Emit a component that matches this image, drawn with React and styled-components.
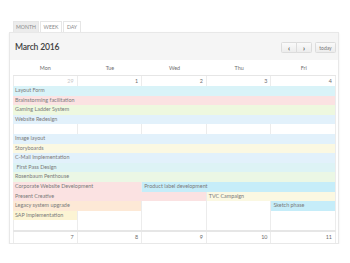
import React from "react";
import styled, { createGlobalStyle } from "styled-components";

const GlobalStyle = createGlobalStyle`
  body {
    margin: 0;
    background: #ffffff;
    font-family: Lato, "Open Sans", sans-serif;
  }
`;

const days = ["Mon", "Tue", "Wed", "Thu", "Fri"];

const colors = {
  cyan: "#d9f3f8",
  pink: "#fbe2e2",
  lime: "#eef8df",
  blue: "#e2f1fb",
  yellow: "#fbf8e2",
  mint: "#ddf3f5",
  green: "#ebf7e5",
  aqua: "#c6edf9",
  orange: "#fde9d6",
  sand: "#fcf4d4",
};

// [title, row, first column, span, colour]
const events = [
  ["Layout Form", 1, 1, 5, "cyan"],
  ["Brainstorming facilitation", 2, 1, 5, "pink"],
  ["Gaming Ladder System", 3, 1, 5, "lime"],
  ["Website Redesign", 4, 1, 5, "blue"],
  ["Image layout", 6, 1, 5, "blue"],
  ["Storyboards", 7, 1, 5, "yellow"],
  ["C-Mail Implementation", 8, 1, 5, "blue"],
  ["\u00a0First Pass Design", 9, 1, 5, "mint"],
  ["Rosenbaum Penthouse", 10, 1, 5, "green"],
  ["Corporate Website Development", 11, 1, 2, "pink"],
  ["Product label development", 11, 3, 3, "aqua"],
  ["Present Creative", 12, 1, 3, "pink"],
  ["TVC Campaign", 12, 4, 2, "yellow"],
  ["Legacy system upgrade", 13, 1, 2, "orange"],
  ["Sketch phase", 13, 5, 1, "aqua"],
  ["SAP Implementation", 14, 1, 1, "sand"],
];

const Page = styled.div`
  padding: 21px 11px 0 9px;
`;

const Tabs = styled.div`
  display: flex;
  gap: 1px;
  padding-left: 4px;
`;

const Tab = styled.div`
  height: 11px;
  width: ${(p) => p.$width}px;
  display: flex;
  align-items: center;
  justify-content: center;
  box-sizing: border-box;
  border: 1px solid #e6e6e6;
  border-bottom: none;
  background: ${(p) => (p.$active ? "#ececec" : "#ffffff")};
  color: #8a8a8a;
  font-size: 5.2px;
  text-transform: uppercase;
`;

const Panel = styled.div`
  border: 1px solid #e8e8e8;
  box-shadow: 0 1px 2px rgba(0, 0, 0, 0.07);
  background: #ffffff;
`;

const Header = styled.div`
  height: 27px;
  background: #f5f5f5;
  display: flex;
  align-items: center;
  justify-content: space-between;
  padding: 0 2px 0 5px;
`;

const Title = styled.div`
  font-size: 8.6px;
  font-weight: 600;
  color: #3f3f3f;
  letter-spacing: -0.2px;
`;

const Controls = styled.div`
  display: flex;
  gap: 4px;
  margin-top: 2px;
`;

const ButtonGroup = styled.div`
  display: flex;
`;

const Button = styled.div`
  height: 11px;
  width: ${(p) => p.$width}px;
  box-sizing: border-box;
  display: flex;
  align-items: center;
  justify-content: center;
  border: 1px solid #dcdcdc;
  margin-left: -1px;
  background: linear-gradient(#fafafa, #ececec);
  color: ${(p) => (p.$text ? "#777" : "#444")};
  font-size: ${(p) => (p.$text ? "5px" : "7px")};
  font-weight: ${(p) => (p.$text ? 400 : 700)};
  border-radius: ${(p) => p.$radius || "1.5px"};
`;

const Body = styled.div`
  padding: 0 2px 0 3px;
`;

const DayNames = styled.div`
  display: grid;
  grid-template-columns: repeat(5, 1fr);
  height: 15px;
  align-items: center;
`;

const DayName = styled.div`
  text-align: center;
  font-size: 5.4px;
  color: #6f6f6f;
`;

const Week = styled.div`
  display: grid;
  grid-template-columns: repeat(5, 1fr);
  grid-template-rows: ${(p) => p.$rows};
  border-top: 1px solid #e6e6e6;
  border-bottom: ${(p) => (p.$last ? "none" : "1px solid #e6e6e6")};
`;

const Cell = styled.div`
  grid-row: 1 / -1;
  grid-column: ${(p) => p.$col};
  border-right: 1px solid #ececec;
  border-left: ${(p) => (p.$col === 1 ? "1px solid #ececec" : "none")};
`;

const DayNumber = styled.div`
  grid-row: 1;
  grid-column: ${(p) => p.$col};
  text-align: right;
  padding-right: 4px;
  font-size: 5.4px;
  line-height: 10px;
  color: ${(p) => (p.$muted ? "#c8c8c8" : "#6c6c6c")};
`;

const Event = styled.div`
  grid-row: ${(p) => p.$row + 1};
  grid-column: ${(p) => p.$col} / span ${(p) => p.$span};
  margin-right: 1px;
  background: ${(p) => colors[p.$color]};
  color: #7a7a7a;
  font-size: 5.4px;
  line-height: 9.6px;
  padding-left: 2px;
  white-space: nowrap;
  overflow: hidden;
`;

const Row = ({ numbers, rows, last, children }) => (
  <Week $rows={rows} $last={last}>
    {numbers.map((n, i) => (
      <Cell key={"c" + i} $col={i + 1} />
    ))}
    {numbers.map((n, i) => (
      <DayNumber key={"n" + i} $col={i + 1} $muted={n === 29}>
        {n}
      </DayNumber>
    ))}
    {children}
  </Week>
);

export default function App() {
  return (
    <Page>
      <GlobalStyle />
      <Tabs>
        <Tab $active $width={26}>Month</Tab>
        <Tab $width={22}>Week</Tab>
        <Tab $width={18}>Day</Tab>
      </Tabs>
      <Panel>
        <Header>
          <Title>March 2016</Title>
          <Controls>
            <ButtonGroup>
              <Button $width={16} $radius="1.5px 0 0 1.5px">‹</Button>
              <Button $width={16} $radius="0 1.5px 1.5px 0">›</Button>
            </ButtonGroup>
            <Button $width={21} $text>
              today
            </Button>
          </Controls>
        </Header>
        <Body>
          <DayNames>
            {days.map((d) => (
              <DayName key={d}>{d}</DayName>
            ))}
          </DayNames>
          <Row numbers={[29, 1, 2, 3, 4]} rows="10px repeat(14, 9.6px) 9.6px">
            {events.map(([title, row, col, span, color]) => (
              <Event key={title} $row={row} $col={col} $span={span} $color={color}>
                {title}
              </Event>
            ))}
          </Row>
          <Row numbers={[7, 8, 9, 10, 11]} rows="11px" last />
        </Body>
      </Panel>
    </Page>
  );
}
